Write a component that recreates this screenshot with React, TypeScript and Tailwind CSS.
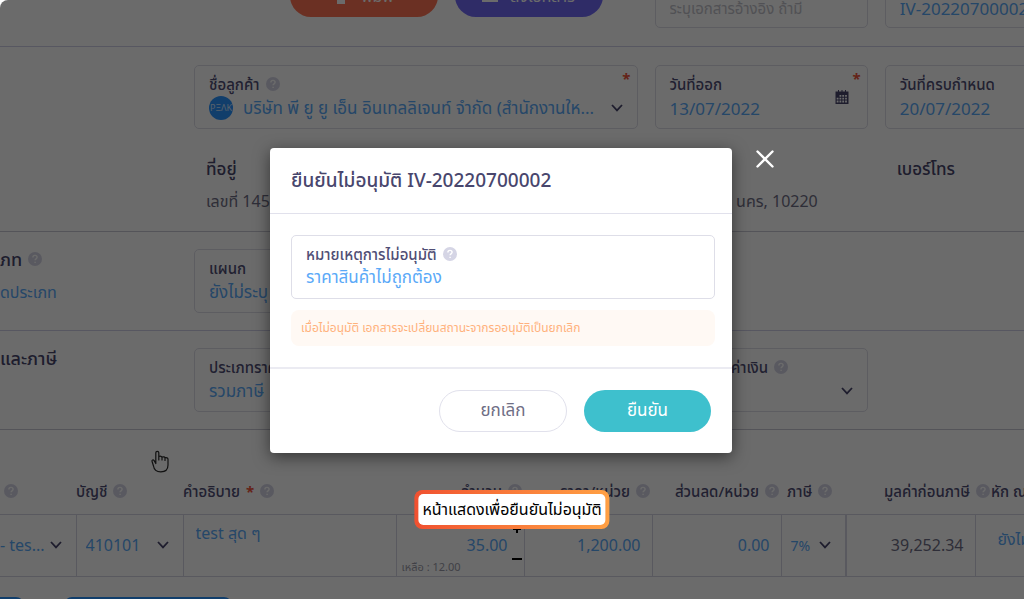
import { useState, type ReactNode } from "react";

const labelText = "text-[15px] leading-5 font-medium text-[#504e75]";
const fieldText = "text-[17px] leading-6 text-[#5aa9f8]";
const valueText = "text-[16px] leading-6 text-[#5aa9f8]";

function Help() {
  return (
    <svg viewBox="0 0 14 14" className="inline-block size-[14px] shrink-0" aria-hidden="true">
      <circle cx="7" cy="7" r="7" fill="#d5d5e5" />
      <path
        d="M4.9 5.4c0-1.2.9-2 2.1-2s2.1.8 2.1 1.9c0 1.5-2 1.6-2 2.9M7.1 9.7v1.2"
        fill="none"
        stroke="#fff"
        strokeWidth="1.4"
      />
    </svg>
  );
}

function Chevron({ className = "" }: { className?: string }) {
  return (
    <svg
      viewBox="0 0 12 8"
      className={`pointer-events-none h-2 w-3 shrink-0 ${className}`}
      fill="none"
      stroke="#48466d"
      strokeWidth="1.8"
      aria-hidden="true"
    >
      <path d="M1 1l5 5.4L11 1" />
    </svg>
  );
}

function Star() {
  return <span className="text-[15px] leading-4 font-bold text-[#f0533a]">*</span>;
}

function Calendar() {
  return (
    <svg viewBox="0 0 14 14" className="size-[14px]" aria-hidden="true">
      <path d="M.5 1.500h13V14H.5z" fill="#48466d" />
      <path d="M3.500 0v2M7 0v2M10.500 0v2" stroke="#48466d" />
      <path
        d="M4.500 5h1.800v1.800H4.500zM7.300 5h1.800v1.800H7.300zM10.100 5h1.800v1.800h-1.800zM1.700 7.800h1.800v1.800H1.700zM4.500 7.800h1.800v1.800H4.500zM7.300 7.800h1.800v1.800H7.300zM10.100 7.800h1.800v1.800h-1.800zM1.700 10.600h1.800v1.800H1.700zM4.500 10.600h1.800v1.800H4.500zM7.300 10.600h1.800v1.800H7.300zM10.100 10.600h1.800v1.800h-1.800z"
        fill="#fff"
      />
    </svg>
  );
}

interface FieldProps {
  id: string;
  label: string;
  value: string;
  help?: boolean;
  select?: boolean;
  required?: boolean;
  logo?: ReactNode;
  icon?: ReactNode;
  className?: string;
}

function Field({ id, label, value, help, select, required, logo, icon, className = "" }: FieldProps) {
  return (
    <div
      className={`relative flex h-16 flex-col justify-center rounded-[5px] border border-[#dedee8] px-[14px] pt-[2px] ${className}`}
    >
      <div className="flex items-center gap-[6px]">
        <label htmlFor={id} className={`${labelText} whitespace-nowrap`}>
          {label}
        </label>
        {help && <Help />}
      </div>
      <div className="flex items-center gap-[10px]">
        {logo}
        {select ? (
          <select id={id} className={`${fieldText} h-7 min-w-0 flex-1 appearance-none bg-transparent`}>
            <option>{value}</option>
          </select>
        ) : (
          <input
            id={id}
            defaultValue={value}
            className={`${fieldText} h-7 min-w-0 flex-1 bg-transparent outline-none`}
          />
        )}
        {select && <Chevron />}
      </div>
      {icon && <span className="absolute right-[18px] top-6">{icon}</span>}
      {required && (
        <span className="absolute right-[6px] top-1 flex">
          <Star />
        </span>
      )}
    </div>
  );
}

const headCell = `${labelText} h-[84px] whitespace-nowrap pt-[38px] align-middle`;
const bodyCell = "h-[62px] border-y border-[#d4d4e2]";

function Head({ text, required }: { text: string; required?: boolean }) {
  return (
    <span className="inline-flex items-center gap-[6px]">
      {text}
      {required && <Star />}
      <Help />
    </span>
  );
}

function ItemsTable() {
  return (
    <table className="w-full table-fixed border-collapse">
      <colgroup>
        <col className="w-[76px]" />
        <col className="w-[107px]" />
        <col className="w-[213px]" />
        <col className="w-32" />
        <col className="w-32" />
        <col className="w-[129px]" />
        <col className="w-[65px]" />
        <col className="w-[129px]" />
        <col />
      </colgroup>
      <thead>
        <tr>
          <th className={`${headCell} pl-1 text-left`} aria-label="สินค้า">
            <span className="flex">
              <Help />
            </span>
          </th>
          <th className={`${headCell} text-left`}>
            <Head text="บัญชี" />
          </th>
          <th className={`${headCell} text-left`}>
            <Head text="คำอธิบาย" required />
          </th>
          <th className={`${headCell} pr-[2px] text-right`}>
            <Head text="จำนวน" />
          </th>
          <th className={`${headCell} pr-[2px] text-right`}>
            <Head text="ราคา/หน่วย" />
          </th>
          <th className={`${headCell} pr-[2px] text-right`}>
            <Head text="ส่วนลด/หน่วย" />
          </th>
          <th className={`${headCell} pl-[6px] text-left`}>
            <Head text="ภาษี" />
          </th>
          <th className={`${headCell} pl-[38px] text-left`}>
            <Head text="มูลค่าก่อนภาษี" />
          </th>
          <th className={`${headCell} pl-4 text-left`}>หัก ณ ที่จ่าย</th>
        </tr>
      </thead>
      <tbody>
        <tr>
          <td className={bodyCell}>
            <div className="flex items-center justify-between pr-[14px]">
              <select aria-label="สินค้า" className={`${valueText} h-7 appearance-none bg-transparent`}>
                <option>- tes...</option>
              </select>
              <Chevron />
            </div>
          </td>
          <td className={`${bodyCell} border-x`}>
            <div className="flex items-center justify-between pl-[9px] pr-[14px]">
              <select aria-label="บัญชี" className={`${valueText} h-7 appearance-none bg-transparent`}>
                <option>410101</option>
              </select>
              <Chevron />
            </div>
          </td>
          <td className={`${bodyCell} border-r pl-3 pt-[6px] align-top`}>
            <input
              aria-label="คำอธิบาย"
              defaultValue="test สุด ๆ"
              className={`${valueText} w-full bg-transparent outline-none`}
            />
          </td>
          <td className={`${bodyCell} border-r`}>
            <div className="relative flex h-[60px] items-center">
              <input
                aria-label="จำนวน"
                defaultValue="35.00"
                className={`${valueText} w-full bg-transparent pr-4 text-right outline-none`}
              />
              <button
                aria-label="เพิ่ม"
                className="absolute right-[2px] top-[9px] flex h-[10px] w-[10px] items-center justify-center"
              >
                <svg viewBox="0 0 10 10" className="size-[10px]" stroke="#000" strokeWidth="2">
                  <path d="M1 5h8M5 1v8" />
                </svg>
              </button>
              <button
                aria-label="ลด"
                className="absolute bottom-[11px] right-[2px] flex h-[10px] w-[10px] items-center justify-center"
              >
                <svg viewBox="0 0 10 10" className="size-[10px]" stroke="#000" strokeWidth="2">
                  <path d="M0 5h10" />
                </svg>
              </button>
              <span className="absolute bottom-0 left-[5px] text-[11px] leading-4 text-[#9a9aa8]">
                เหลือ : 12.00
              </span>
            </div>
          </td>
          <td className={`${bodyCell} border-r`}>
            <input
              aria-label="ราคา/หน่วย"
              defaultValue="1,200.00"
              className={`${valueText} w-full bg-transparent pr-[11px] text-right outline-none`}
            />
          </td>
          <td className={`${bodyCell} border-r`}>
            <input
              aria-label="ส่วนลด/หน่วย"
              defaultValue="0.00"
              className={`${valueText} w-full bg-transparent pr-[11px] text-right outline-none`}
            />
          </td>
          <td className={`${bodyCell} border-r-2`}>
            <div className="flex items-center justify-between pl-[9px] pr-[14px]">
              <select
                aria-label="ภาษี"
                className="h-7 appearance-none bg-transparent text-[14px] text-[#5aa9f8]"
              >
                <option>7%</option>
              </select>
              <Chevron />
            </div>
          </td>
          <td className={`${bodyCell} border-r pr-[11px] text-right text-[16px] text-[#6f6e85]`}>39,252.34</td>
          <td className={`${bodyCell} overflow-hidden whitespace-nowrap pb-3 pl-[22px]`}>
            <select
              aria-label="หัก ณ ที่จ่าย"
              className={`${valueText} h-7 appearance-none bg-transparent`}
            >
              <option>ยังไม่ระบุ</option>
            </select>
          </td>
        </tr>
      </tbody>
    </table>
  );
}

function InvoicePage() {
  return (
    <main>
      <section className="flex h-[47px] items-end overflow-hidden border-b border-[#cfcfe6]">
        <div className="-mr-[74px] grid min-w-0 flex-1 grid-cols-4 gap-[17px] pl-[194px]">
          <div className="col-span-2 mb-[29px] flex items-end justify-end gap-[17px] pr-[35px]">
            <button className="flex h-[42px] w-[148px] items-center justify-center gap-3 rounded-full bg-[#ff7454] text-[16px] text-white">
              <svg viewBox="0 0 16 16" className="size-4" fill="#fff" aria-hidden="true">
                <path d="M3 0h10v4H3zM1 5h14v7h-2V9H3v3H1zM4 10h8v6H4z" />
              </svg>
              พิมพ์
            </button>
            <button className="flex h-[42px] w-[148px] items-center justify-center gap-3 rounded-full bg-[#716af5] text-[16px] text-white">
              <svg viewBox="0 0 16 14" className="h-[14px] w-4" fill="#fff" aria-hidden="true">
                <path d="M0 1h16v12H0z" />
              </svg>
              ส่งเอกสาร
            </button>
          </div>
          <div className="mb-[18px] flex h-16 items-end rounded-[5px] border border-[#dedee8] px-[14px] pb-[5px]">
            <input
              aria-label="เอกสารอ้างอิง"
              placeholder="ระบุเอกสารอ้างอิง ถ้ามี"
              className="h-7 w-full bg-transparent text-[15px] outline-none placeholder:text-[#c2c2ca]"
            />
          </div>
          <div className="mb-[18px] flex h-16 items-end rounded-[5px] border border-[#dedee8] px-[14px] pb-[5px]">
            <input
              aria-label="เลขที่เอกสาร"
              defaultValue="IV-20220700002"
              className={`${fieldText} h-7 w-full bg-transparent outline-none`}
            />
          </div>
        </div>
      </section>

      <section className="h-[185px] border-b border-[#c8c8d4] pt-[18px]">
        <div className="-mr-[74px] grid grid-cols-4 gap-x-[17px] pl-[194px]">
          <Field
            id="customer"
            label="ชื่อลูกค้า"
            value="บริษัท พี ยู ยู เอ็น อินเทลลิเจนท์ จำกัด (สำนักงานให..."
            help
            select
            required
            className="col-span-2"
            logo={
              <span className="flex size-6 shrink-0 items-center justify-center rounded-full bg-[#2a93ff] text-[9px] text-[#cfe6ff]">
                PΞΛK
              </span>
            }
          />
          <Field id="issued" label="วันที่ออก" value="13/07/2022" required icon={<Calendar />} />
          <Field id="due" label="วันที่ครบกำหนด" value="20/07/2022" />
          <div className="col-span-3 mt-7 flex flex-col gap-2 pl-3">
            <h3 className="text-[17px] leading-6 font-medium text-[#48466d]">ที่อยู่</h3>
            <p className="flex justify-between pr-[50px] text-[16px] leading-6 text-[#6f6e85]">
              <span>เลขที่ 145</span>
              <span>นคร, 10220</span>
            </p>
          </div>
          <h3 className="mt-7 pl-3 text-[17px] leading-6 font-medium text-[#48466d]">เบอร์โทร</h3>
        </div>
      </section>

      <section className="-mr-[74px] flex h-[99px] border-b border-[#cfcfe6] pt-[17px]">
        <div className="flex w-[194px] shrink-0 flex-col gap-[11px]">
          <h2 className="flex items-center gap-[6px] text-[18px] leading-5 font-medium text-[#48466d]">
            ภท <Help />
          </h2>
          <a href="#category" className={valueText}>
            ดประเภท
          </a>
        </div>
        <div className="grid flex-1 grid-cols-4 gap-[17px]">
          <Field id="department" label="แผนก" value="ยังไม่ระบุ" select />
        </div>
      </section>

      <section className="-mr-[74px] flex h-[99px] border-b border-[#c8c8d4] pt-[17px]">
        <h2 className="w-[194px] shrink-0 text-[18px] leading-5 font-medium text-[#48466d]">และภาษี</h2>
        <div className="grid flex-1 grid-cols-4 gap-[17px]">
          <Field id="price-type" label="ประเภทราคา" value="รวมภาษี" select className="col-span-2" />
          <Field id="currency" label="เลือกสกุล ค่าเงิน" value="" help select />
        </div>
      </section>

      <ItemsTable />

      <div className="mt-5 flex gap-10">
        <button aria-label="เพิ่มแถว" className="h-9 w-6 rounded-r-[8px] bg-[#2a93ff]" />
        <button aria-label="เพิ่มรายการใหม่" className="h-9 w-[168px] rounded-[8px] bg-[#2a93ff]" />
      </div>
    </main>
  );
}

function HandCursor() {
  return (
    <svg
      viewBox="0 0 18 23"
      className="absolute left-[151px] top-[450px] h-[23px] w-[18px]"
      fill="none"
      stroke="#111"
      strokeWidth="1.2"
      strokeLinejoin="round"
      strokeLinecap="round"
      aria-hidden="true"
    >
      <path d="M4.800 13.500V2.800a1.500 1.500 0 0 1 3 0V10M7.800 6.500c1.500-.6 3-.2 3.200.8V10M11 7c1.400-.5 2.900-.1 3 1V10.500M14 7.800c1.500-.4 3 .1 3 1.500V15c0 4.400-2.800 6.800-7.200 6.800C5.600 21.800 3 19.600 2.500 16L1 11.300c-.3-1.400 1.200-1.900 2-.9l1.800 3.100" />
    </svg>
  );
}

function RejectDialog({ onClose }: { onClose: () => void }) {
  return (
    <div className="absolute inset-0 flex items-start justify-center bg-black/58 pr-[22px] pt-[148px]">
      <div
        role="dialog"
        aria-labelledby="reject-title"
        className="relative w-full max-w-[462px] rounded-[4px] bg-white shadow-[0_4px_16px_rgba(0,0,0,0.5)]"
      >
        <header className="border-b border-[#e1e1ec] px-[21px] py-[17px]">
          <h1 id="reject-title" className="text-[19px] leading-[31px] font-medium text-[#48466d]">
            ยืนยันไม่อนุมัติ IV-20220700002
          </h1>
        </header>
        <div className="flex flex-col gap-[11px] pb-[21px] pl-[21px] pr-[17px] pt-[21px]">
          <Field id="reason" label="หมายเหตุการไม่อนุมัติ" value="ราคาสินค้าไม่ถูกต้อง" help />
          <p className="rounded-[8px] bg-[#fff9f4] px-[10px] py-2 text-[12px] leading-5 text-[#ffb27d]">
            เมื่อไม่อนุมัติ เอกสารจะเปลี่ยนสถานะจากรออนุมัติเป็นยกเลิก
          </p>
        </div>
        <footer className="flex justify-end gap-[17px] border-t-2 border-[#ebebf2] p-[21px]">
          <button
            onClick={onClose}
            className="h-[42px] w-32 rounded-full border border-[#e1e1ec] pb-[2px] text-[17px] text-[#6f6e85]"
          >
            ยกเลิก
          </button>
          <button
            onClick={onClose}
            className="h-[42px] w-[127px] rounded-full bg-[#3ec0cd] pb-[2px] text-[17px] text-white"
          >
            ยืนยัน
          </button>
        </footer>
        <button aria-label="ปิด" onClick={onClose} className="absolute -right-[42px] top-[2px]">
          <svg
            viewBox="0 0 18 18"
            className="size-[18px]"
            stroke="#fff"
            strokeWidth="2.400"
            strokeLinecap="round"
            aria-hidden="true"
          >
            <path d="M1.500 1.500l15 15M16.500 1.500l-15 15" />
          </svg>
        </button>
      </div>
    </div>
  );
}

export default function App() {
  const [open, setOpen] = useState(true);

  return (
    <div className="relative h-screen overflow-hidden rounded-tl-[8px] bg-white font-['Noto_Sans','Noto_Sans_Thai',sans-serif]">
      <InvoicePage />
      {open && <RejectDialog onClose={() => setOpen(false)} />}
      <HandCursor />
      <div className="absolute left-1/2 top-[490px] -translate-x-1/2 rounded-[8px] bg-linear-to-r from-[#f05030] to-[#ffa044] p-1">
        <p className="whitespace-nowrap rounded-[5px] bg-white px-1 pb-1 pt-[3px] text-[16px] leading-6 text-black">
          หน้าแสดงเพื่อยืนยันไม่อนุมัติ
        </p>
      </div>
    </div>
  );
}
